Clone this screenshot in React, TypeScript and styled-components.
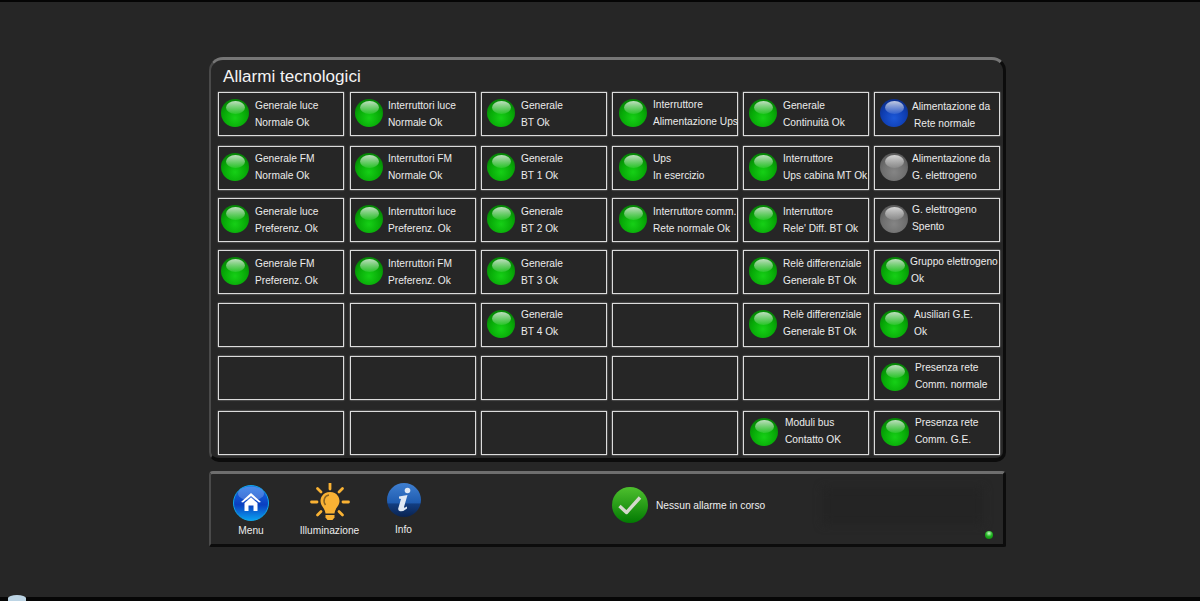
import React from 'react';
import styled, { createGlobalStyle } from 'styled-components';

const GlobalStyle = createGlobalStyle`
  html, body {
    margin: 0;
    padding: 0;
    background: #262626;
  }
  body {
    font-family: "Liberation Sans", Arial, sans-serif;
    color: #ececec;
    overflow: hidden;
  }
`;

const Page = styled.div`
  position: relative;
  box-sizing: border-box;
  width: 1200px;
  height: 601px;
  padding: 55px 194px 0 209px;
  background: #262626;
  border-top: 2px solid #050505;
  border-bottom: 4px solid #060606;
`;

const Panel = styled.section`
  box-sizing: border-box;
  width: 797px;
  height: 405px;
  padding: 6px 6px 0 7px;
  background: #272727;
  border-top: 3px solid #767676;
  border-left: 2px solid #4a4a4a;
  border-right: 3px solid #0c0c0c;
  border-bottom: 4px solid #0c0c0c;
  border-radius: 14px 14px 10px 10px;
`;

const Title = styled.h1`
  margin: 0 0 4px 5px;
  font-size: 17.1px;
  line-height: 22px;
  font-weight: 400;
  color: #f4f4f4;
`;

const Row = styled.div<{ $top: number }>`
  display: grid;
  grid-template-columns: 132px repeat(5, 131px);
  margin-top: ${p => p.$top}px;
`;

const Card = styled.div`
  position: relative;
  box-sizing: border-box;
  width: 126px;
  height: 44px;
  display: flex;
  align-items: center;
  border: 1px solid #dcdcdc;
  box-shadow: 0 0 1.5px rgba(225, 225, 225, 0.7);
  background: #262626;
`;

const Lamp = styled.span<{ $tone: 'green' | 'blue' | 'grey'; $x: number }>`
  position: absolute;
  left: ${p => p.$x}px;
  top: 6px;
  width: 28px;
  height: 28px;
  border-radius: 50%;
  background: ${p =>
    p.$tone === 'green'
      ? 'radial-gradient(circle at 50% 68%, #16d016 0%, #07aa07 48%, #058405 78%, #045e04 100%)'
      : p.$tone === 'blue'
      ? 'radial-gradient(circle at 50% 68%, #1c58d8 0%, #0f3fb4 48%, #0b2f8c 78%, #08205e 100%)'
      : 'radial-gradient(circle at 50% 68%, #858585 0%, #6f6f6f 48%, #5a5a5a 78%, #404040 100%)'};

  &::before {
    content: '';
    position: absolute;
    left: 4.5px;
    top: 2px;
    width: 19px;
    height: 13px;
    border-radius: 50%;
    background: linear-gradient(to bottom, rgba(255, 255, 255, 0.74), rgba(255, 255, 255, 0.1));
  }
`;

const Label = styled.div<{ $x: number; $y: number }>`
  position: relative;
  margin-left: ${p => p.$x}px;
  top: ${p => p.$y}px;
  font-size: 10.2px;
  line-height: 16.6px;
  white-space: nowrap;
  color: #ececec;
`;

const Line = styled.div<{ $indent: number }>`
  margin-left: ${p => p.$indent}px;
`;

const Toolbar = styled.footer`
  position: relative;
  box-sizing: border-box;
  display: flex;
  width: 797px;
  height: 76px;
  margin-top: 9px;
  background: #272727;
  border-top: 3px solid #6e6e6e;
  border-left: 2px solid #4a4a4a;
  border-right: 3px solid #0c0c0c;
  border-bottom: 3px solid #0c0c0c;
  border-radius: 4px 4px 2px 2px;
`;

const Tool = styled.div<{ $width: number; $lift: number }>`
  width: ${p => p.$width}px;
  display: flex;
  flex-direction: column;
  align-items: center;
  margin-top: ${p => 10 - p.$lift}px;
`;

const ToolIcon = styled.svg`
  display: block;
  width: 40px;
  height: 40px;
`;

const ToolLabel = styled.span<{ $gap: number }>`
  margin-top: ${p => p.$gap}px;
  font-size: 10.2px;
  line-height: 14px;
  color: #ececec;
`;

const Status = styled.div`
  display: flex;
  align-items: center;
  gap: 7px;
  margin-left: 172px;
  height: 62px;
  font-size: 10.2px;
  color: #efefef;
`;

const Smudge = styled.div`
  position: absolute;
  left: 612px;
  top: 14px;
  width: 160px;
  height: 36px;
  background: #242424;
  filter: blur(5px);
`;

const StatusLed = styled.span`
  position: absolute;
  right: 10px;
  bottom: 5px;
  width: 8px;
  height: 8px;
  border-radius: 50%;
  background: radial-gradient(circle at 50% 30%, #c8f5c8 0%, #22b522 45%, #067a06 100%);
`;

const Orb = styled.span`
  position: absolute;
  left: 8px;
  bottom: -4px;
  width: 18px;
  height: 6px;
  border-radius: 50% 50% 0 0;
  background: #bcd4e4;
`;

type Item = {
  a: string;
  b: string;
  tone?: 'green' | 'blue' | 'grey';
  lamp: number;
  x: number;
  y?: number;
  ia?: number;
  ib?: number;
};

const G = (a: string, b: string, lamp: number, x: number, y = 1, ia = 0, ib = 0): Item => ({
  a, b, lamp, x, y, ia, ib, tone: 'green',
});

const rows: { top: number; items: (Item | null)[] }[] = [
  {
    top: 0,
    items: [
      G('Generale luce', 'Normale Ok', 2, 36),
      G('Interruttori luce', 'Normale Ok', 4, 37),
      G('Generale', 'BT Ok', 5, 39),
      G('Interruttore', 'Alimentazione Ups', 6, 40, 0),
      G('Generale', 'Continuità Ok', 5, 39),
      { a: 'Alimentazione da', b: 'Rete normale', tone: 'blue', lamp: 5, x: 37, y: 2, ia: 0, ib: 2 },
    ],
  },
  {
    top: 10,
    items: [
      G('Generale FM', 'Normale Ok', 2, 36, 0),
      G('Interruttori FM', 'Normale Ok', 4, 37, 0),
      G('Generale', 'BT 1 Ok', 5, 39, 0),
      G('Ups', 'In esercizio', 6, 40, 0),
      G('Interruttore', 'Ups cabina MT Ok', 5, 39, 0),
      { a: 'Alimentazione da', b: 'G. elettrogeno', tone: 'grey', lamp: 5, x: 37, y: 0 },
    ],
  },
  {
    top: 8,
    items: [
      G('Generale luce', 'Preferenz. Ok', 2, 36),
      G('Interruttori luce', 'Preferenz. Ok', 4, 37),
      G('Generale', 'BT 2 Ok', 5, 39),
      G('Interruttore comm.', 'Rete normale Ok', 6, 40),
      G('Interruttore', "Rele' Diff. BT Ok", 5, 39),
      { a: 'G. elettrogeno', b: 'Spento', tone: 'grey', lamp: 5, x: 37, y: -1 },
    ],
  },
  {
    top: 8,
    items: [
      G('Generale FM', 'Preferenz. Ok', 2, 36),
      G('Interruttori FM', 'Preferenz. Ok', 4, 37),
      G('Generale', 'BT 3 Ok', 5, 39),
      null,
      G('Relè differenziale', 'Generale BT Ok', 5, 39),
      G('Gruppo elettrogeno', 'Ok', 6, 35, -1, 0, 1),
    ],
  },
  {
    top: 9,
    items: [
      null,
      null,
      G('Generale', 'BT 4 Ok', 5, 39, -1),
      null,
      G('Relè differenziale', 'Generale BT Ok', 5, 39, -1),
      G('Ausiliari G.E.', 'Ok', 5, 39, -1),
    ],
  },
  {
    top: 9,
    items: [null, null, null, null, null, G('Presenza rete', 'Comm. normale', 6, 40, -1)],
  },
  {
    top: 11,
    items: [
      null,
      null,
      null,
      null,
      G('Moduli bus', 'Contatto OK', 6, 41, -1),
      G('Presenza rete', 'Comm. G.E.', 6, 40, -1),
    ],
  },
];

const HomeIcon = () => (
  <ToolIcon viewBox="0 0 40 40">
    <defs>
      <linearGradient id="homeFill" x1="0" y1="0" x2="0" y2="1">
        <stop offset="0" stopColor="#1a6fe8" />
        <stop offset="0.55" stopColor="#0a3fc0" />
        <stop offset="1" stopColor="#0aa0f0" />
      </linearGradient>
    </defs>
    <circle cx="20" cy="20" r="17.5" fill="url(#homeFill)" stroke="#0fa6e8" strokeWidth="1" />
    <ellipse cx="20" cy="10.5" rx="13" ry="7" fill="#fff" opacity="0.22" />
    <path d="M20 10 L30 19 L28 19.5 L20 13 L12 19.5 L10 19 Z" fill="#fff" />
    <path d="M13.5 20 L20 14.5 L26.5 20 V28 H22.5 V22.5 H17.5 V28 H13.5 Z" fill="#fff" />
  </ToolIcon>
);

const BulbIcon = () => (
  <ToolIcon viewBox="0 0 40 40">
    <g stroke="#f9b234" strokeWidth="2.8" strokeLinecap="round">
      <line x1="20" y1="0.5" x2="20" y2="6" />
      <line x1="7.5" y1="5.5" x2="11" y2="9" />
      <line x1="32.5" y1="5.5" x2="29" y2="9" />
      <line x1="1.5" y1="19" x2="7" y2="19" />
      <line x1="33" y1="19" x2="38.5" y2="19" />
      <line x1="7.5" y1="32" x2="11" y2="28.5" />
      <line x1="32.5" y1="32" x2="29" y2="28.5" />
    </g>
    <path d="M20 9 C12.5 9 10.5 15 10.5 18 C10.5 23 15 25 15.5 30.5 H24.5 C25 25 29.5 23 29.5 18 C29.5 15 27.5 9 20 9 Z" fill="#f9b234" />
    <path d="M15.5 22 C12.5 18 14.5 12.5 19 12" stroke="#8a6420" strokeWidth="1.5" fill="none" />
    <path d="M15.5 32 H24.5 V34.5 L22.5 37 H17.5 L15.5 34.5 Z" fill="#f9b234" />
  </ToolIcon>
);

const InfoIcon = () => (
  <ToolIcon viewBox="0 0 40 40">
    <defs>
      <linearGradient id="infoFill" x1="0" y1="0" x2="0" y2="1">
        <stop offset="0" stopColor="#3f7fd0" />
        <stop offset="0.58" stopColor="#1f5cb0" />
        <stop offset="0.62" stopColor="#123d80" />
        <stop offset="1" stopColor="#0a2350" />
      </linearGradient>
    </defs>
    <circle cx="20" cy="20" r="17" fill="url(#infoFill)" />
    <circle cx="23.5" cy="10.5" r="2.8" fill="#dfe8f4" />
    <path d="M15 16.5 L23.5 15 L20 27 Q20 28.5 23 26.5 L23 28.5 Q19 32 15.5 31 Q13.5 30 14.5 27.5 L17 19 L15 18.5 Z" fill="#dfe8f4" />
  </ToolIcon>
);

const CheckIcon = () => (
  <svg width="38" height="38" viewBox="0 0 38 38">
    <defs>
      <linearGradient id="checkFill" x1="0" y1="0" x2="0" y2="1">
        <stop offset="0" stopColor="#4ec02e" />
        <stop offset="1" stopColor="#027a02" />
      </linearGradient>
    </defs>
    <circle cx="19" cy="19" r="18" fill="url(#checkFill)" />
    <path d="M8.5 20 L15.5 26.5 L29 11.5" fill="none" stroke="#d4d8cc" strokeWidth="3.4" strokeLinejoin="round" />
  </svg>
);

const App: React.FC = () => {
  return (
    <>
      <GlobalStyle />
      <Page>
        <Panel>
          <Title>Allarmi tecnologici</Title>
          {rows.map((row, r) => (
            <Row key={r} $top={row.top}>
              {row.items.map((item, c) => (
                <Card key={c}>
                  {item && (
                    <>
                      <Lamp $tone={item.tone || 'green'} $x={item.lamp} />
                      <Label $x={item.x} $y={item.y ?? 0}>
                        <Line $indent={item.ia || 0}>{item.a}</Line>
                        <Line $indent={item.ib || 0}>{item.b}</Line>
                      </Label>
                    </>
                  )}
                </Card>
              ))}
            </Row>
          ))}
        </Panel>
        <Toolbar>
          <Tool $width={80} $lift={1}>
            <HomeIcon />
            <ToolLabel $gap={1}>Menu</ToolLabel>
          </Tool>
          <Tool $width={77} $lift={1}>
            <BulbIcon />
            <ToolLabel $gap={1}>Illuminazione</ToolLabel>
          </Tool>
          <Tool $width={71} $lift={4}>
            <InfoIcon />
            <ToolLabel $gap={3}>Info</ToolLabel>
          </Tool>
          <Status>
            <CheckIcon />
            <span>Nessun allarme in corso</span>
          </Status>
          <Smudge />
          <StatusLed />
        </Toolbar>
        <Orb />
      </Page>
    </>
  );
};

export default App;
